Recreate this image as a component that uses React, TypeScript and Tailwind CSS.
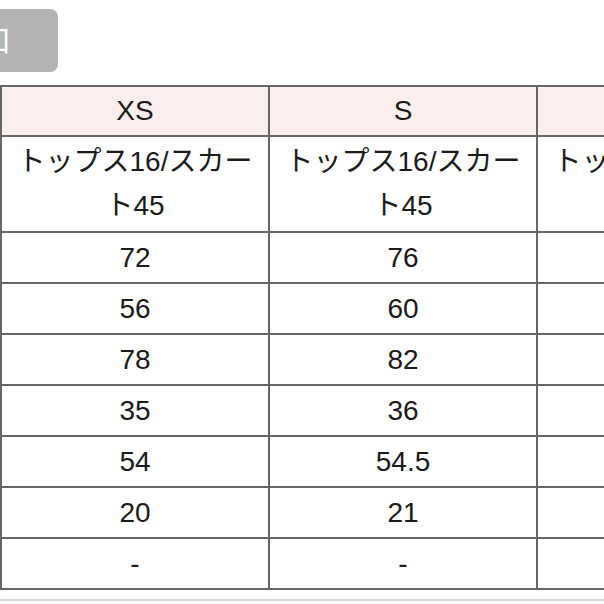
const rows: string[][] = [
  ["72", "76", "80"],
  ["56", "60", "64"],
  ["78", "82", "86"],
  ["35", "36", "37"],
  ["54", "54.5", "55"],
  ["20", "21", "22"],
  ["-", "-", "-"],
];

const sizes = ["XS", "S", "M"];

export default function App() {
  return (
    <div
      className="w-[604px] h-[604px] overflow-hidden bg-white text-[#1a1a1a]"
      style={{ fontFamily: '"Liberation Sans", "Noto Sans CJK JP", sans-serif' }}
    >
      <div className="pt-[9px]">
        <div className="-ml-[40px] w-[98px] h-[63px] rounded-lg bg-[#b3b3b3] flex items-center overflow-hidden">
          <span className="pl-[21px] text-[30px] leading-none text-white">口</span>
        </div>
      </div>

      <table className="mt-[13px] border-collapse w-[806px] table-fixed text-[28px] leading-[44px] text-center">
        <thead>
          <tr className="bg-[#fdeeee]">
            {sizes.map((s) => (
              <th key={s} className="border-2 border-[#666] font-normal h-[50px] px-2 py-[2px]">
                {s}
              </th>
            ))}
          </tr>
        </thead>
        <tbody>
          <tr>
            {sizes.map((s) => (
              <td key={s} className="border-2 border-[#666] px-[12px] py-[3px]">
                トップス16/スカート45
              </td>
            ))}
          </tr>
          {rows.map((r, i) => (
            <tr key={i}>
              {r.map((v, j) => (
                <td key={j} className="border-2 border-[#666] h-[51px] px-2 py-[2px]">
                  {v}
                </td>
              ))}
            </tr>
          ))}
        </tbody>
      </table>

      <div className="mt-[9px] h-[2px] bg-[#d8d8d8]" />
    </div>
  );
}
